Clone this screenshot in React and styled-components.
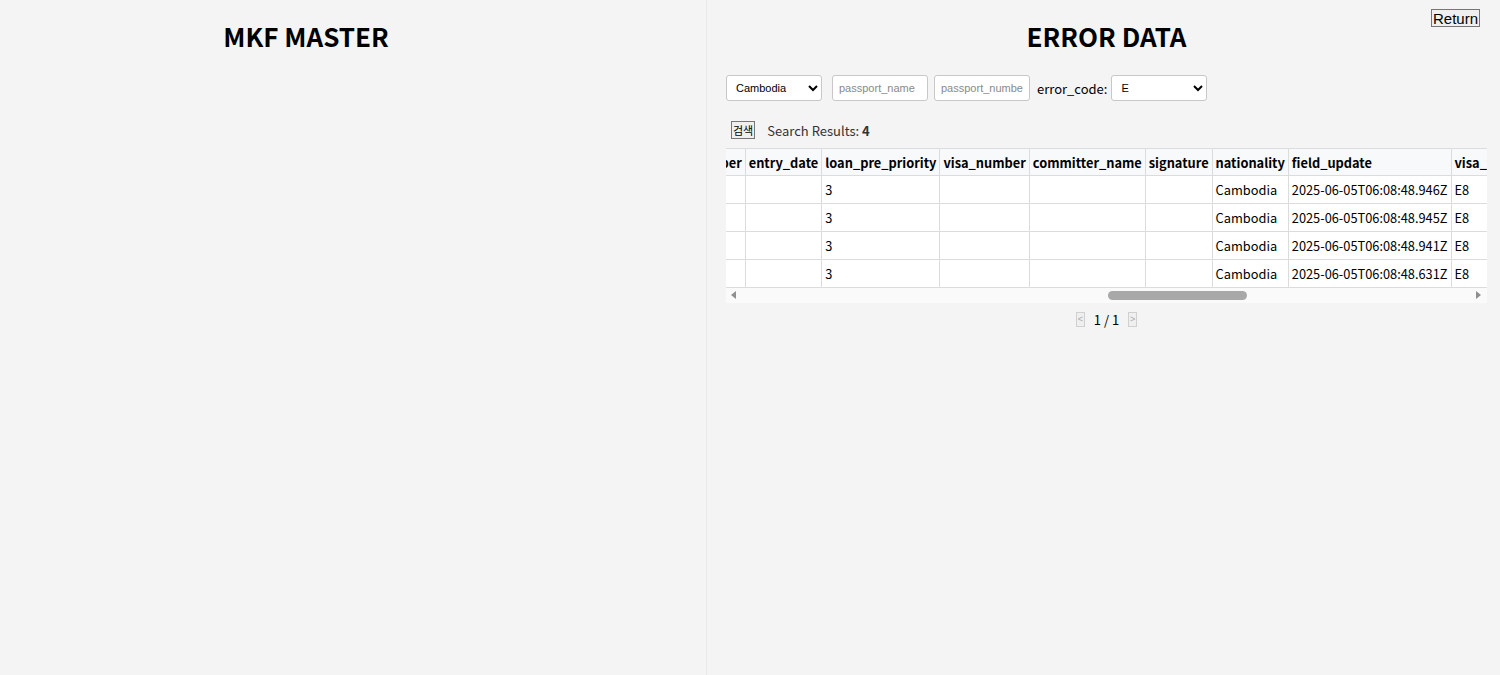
import React, { useLayoutEffect, useRef, useState } from "react";
import styled, { createGlobalStyle } from "styled-components";

const GlobalStyle = createGlobalStyle`
  html, body {
    margin: 0;
    padding: 0;
    background: #f4f4f4;
    font-family: "Noto Sans CJK KR", "Noto Sans", sans-serif;
  }
`;

// hidden columns (scrolled off to the left) get a fixed width so the scroll matches
const columns = [
  { key: "id", w: 60 },
  { key: "error_code", w: 90 },
  { key: "error_message", w: 400 },
  { key: "created_at", w: 170 },
  { key: "branch_code", w: 100 },
  { key: "passport_name", w: 180 },
  { key: "gender", w: 70 },
  { key: "birth_date", w: 100 },
  { key: "phone_number", w: 120 },
  { key: "address", w: 220 },
  { key: "email", w: 160 },
  { key: "employer_name", w: 150 },
  { key: "passport_number" },
  { key: "entry_date" },
  { key: "loan_pre_priority" },
  { key: "visa_number" },
  { key: "committer_name" },
  { key: "signature" },
  { key: "nationality" },
  { key: "field_update" },
  { key: "visa_type", w: 90 },
  { key: "visa_expiry_date", w: 130 },
  { key: "loan_amount", w: 110 },
  { key: "loan_status", w: 100 },
  { key: "bank_account", w: 140 },
  { key: "bank_name", w: 120 },
  { key: "remark", w: 220 },
  { key: "approved_by", w: 120 },
  { key: "updated_at", w: 170 },
];

const rows = [
  { error_code: "E", loan_pre_priority: "3", nationality: "Cambodia", field_update: "2025-06-05T06:08:48.946Z", visa_type: "E8" },
  { error_code: "E", loan_pre_priority: "3", nationality: "Cambodia", field_update: "2025-06-05T06:08:48.945Z", visa_type: "E8" },
  { error_code: "E", loan_pre_priority: "3", nationality: "Cambodia", field_update: "2025-06-05T06:08:48.941Z", visa_type: "E8" },
  { error_code: "E", loan_pre_priority: "3", nationality: "Cambodia", field_update: "2025-06-05T06:08:48.631Z", visa_type: "E8" },
];

const TRACK_PAD = 15;

const App = () => {
  const scrollRef = useRef(null);
  const anchorRef = useRef(null);
  const [thumb, setThumb] = useState({ left: 0, width: 0 });

  useLayoutEffect(() => {
    const box = scrollRef.current;
    if (!box || !anchorRef.current) return;
    box.scrollLeft = anchorRef.current.offsetLeft - 19;
    const track = box.clientWidth - TRACK_PAD * 2;
    setThumb({
      left: (track * box.scrollLeft) / box.scrollWidth,
      width: (track * box.clientWidth) / box.scrollWidth,
    });
  }, []);

  return (
    <>
      <GlobalStyle />
      <Page>
        <LeftPanel>
          <LeftTitle>MKF MASTER</LeftTitle>
        </LeftPanel>
        <RightPanel>
          <ReturnButton>Return</ReturnButton>
          <Title>ERROR DATA</Title>
          <FilterRow>
            <Select defaultValue="Cambodia" $gap={10}>
              <option>Cambodia</option>
              <option>Vietnam</option>
              <option>Nepal</option>
            </Select>
            <Input placeholder="passport_name" />
            <Input placeholder="passport_number" />
            <Label>error_code:</Label>
            <Select defaultValue="E">
              <option>E</option>
              <option>W</option>
            </Select>
          </FilterRow>
          <SearchRow>
            <SmallButton>검색</SmallButton>
            <Results>
              Search Results: <b>4</b>
            </Results>
          </SearchRow>
          <TableScroll ref={scrollRef}>
            <Table>
              <thead>
                <tr>
                  {columns.map((c) => (
                    <Th
                      key={c.key}
                      $w={c.w}
                      ref={c.key === "entry_date" ? anchorRef : null}
                    >
                      {c.key}
                    </Th>
                  ))}
                </tr>
              </thead>
              <tbody>
                {rows.map((r, i) => (
                  <tr key={i}>
                    {columns.map((c) => (
                      <Td key={c.key} $w={c.w}>
                        {r[c.key] || ""}
                      </Td>
                    ))}
                  </tr>
                ))}
              </tbody>
            </Table>
          </TableScroll>
          <ScrollBar>
            <ArrowButton>
              <svg width="15" height="15" viewBox="0 0 15 15">
                <polygon points="5,7 10,3 10,11" fill="#8f8f8f" />
              </svg>
            </ArrowButton>
            <Track>
              <Thumb style={{ left: thumb.left, width: thumb.width }} />
            </Track>
            <ArrowButton>
              <svg width="15" height="15" viewBox="0 0 15 15">
                <polygon points="9,7 4,3 4,11" fill="#8f8f8f" />
              </svg>
            </ArrowButton>
          </ScrollBar>
          <Pager>
            <PageButton disabled>&lt;</PageButton>
            <PageText>1 / 1</PageText>
            <PageButton disabled>&gt;</PageButton>
          </Pager>
        </RightPanel>
      </Page>
    </>
  );
};
export default App;

const Page = styled.div`
  display: flex;
  min-height: 675px;
`;

const LeftPanel = styled.div`
  width: 707px;
  flex-shrink: 0;
  border-right: 1px solid #e9e9e9;
  box-sizing: border-box;
  padding-right: 94px;
`;

const LeftTitle = styled.h2`
  margin: 17px 0 0;
  text-align: center;
  font-size: 26px;
  font-weight: 700;
  color: #000;
`;

const RightPanel = styled.div`
  position: relative;
  flex: 1;
  min-width: 0;
  padding: 0 13px 0 19px;
`;

const Title = styled(LeftTitle)``;

const ReturnButton = styled.button`
  position: absolute;
  top: 9px;
  right: 20px;
  height: 18px;
  padding: 0 1px;
  font-family: "Liberation Sans", Arial, sans-serif;
  font-size: 15px;
  line-height: 15px;
  color: #000;
  background: #efefef;
  border: 1px solid #767676;
  border-radius: 0;
`;

const FilterRow = styled.div`
  display: flex;
  align-items: center;
  margin-top: 21px;
`;

const Select = styled.select`
  width: 96px;
  height: 26px;
  box-sizing: border-box;
  margin-right: ${(p) => p.$gap || 0}px;
  padding: 0 5px;
  font-family: "Liberation Sans", Arial, sans-serif;
  font-size: 11px;
  color: #000;
  background: #fff;
  border: 1px solid #c8c8c8;
  border-radius: 3px;
`;

const Input = styled.input`
  width: 96px;
  height: 26px;
  box-sizing: border-box;
  margin-right: 6px;
  padding: 0 6px;
  font-family: "Liberation Sans", Arial, sans-serif;
  font-size: 11px;
  background: #fff;
  border: 1px solid #c8c8c8;
  border-radius: 3px;
  &::placeholder {
    color: #8a8a8a;
  }
`;

const Label = styled.span`
  margin: 0 4px 0 1px;
  font-size: 13px;
  color: #000;
`;

const SearchRow = styled.div`
  display: flex;
  align-items: center;
  margin-top: 19px;
  padding-left: 5px;
  height: 20px;
`;

const SmallButton = styled.button`
  padding: 0 1px;
  height: 18px;
  font-family: "Noto Sans CJK KR", sans-serif;
  font-size: 11px;
  line-height: 14px;
  color: #000;
  background: #efefef;
  border: 1px solid #767676;
  border-radius: 0;
`;

const Results = styled.span`
  margin-left: 12px;
  font-size: 13px;
  color: #333;
  b {
    font-weight: 700;
  }
`;

const TableScroll = styled.div`
  margin-top: 8px;
  overflow: hidden;
`;

const ScrollBar = styled.div`
  display: flex;
  height: 15px;
  background: #fafafa;
`;

const ArrowButton = styled.div`
  width: 15px;
  height: 15px;
  flex-shrink: 0;
  svg {
    display: block;
  }
`;

const Track = styled.div`
  position: relative;
  flex: 1;
`;

const Thumb = styled.div`
  position: absolute;
  top: 3px;
  height: 9px;
  border-radius: 5px;
  background: #a8a8a8;
`;

const Table = styled.table`
  border-collapse: collapse;
  white-space: nowrap;
  font-size: 12.8px;
  color: #000;
`;

const Th = styled.th`
  min-width: ${(p) => (p.$w ? `${p.$w}px` : "0")};
  height: 26px;
  padding: 0 3px;
  text-align: left;
  font-weight: 700;
  background: #f8f9fa;
  border: 1px solid #dcdcdc;
`;

const Td = styled.td`
  min-width: ${(p) => (p.$w ? `${p.$w}px` : "0")};
  height: 27px;
  padding: 0 3px;
  background: #fff;
  border: 1px solid #dcdcdc;
`;

const Pager = styled.div`
  display: flex;
  justify-content: center;
  align-items: center;
  gap: 9px;
  margin-top: 7px;
`;

const PageButton = styled.button`
  width: 9px;
  height: 15px;
  padding: 0;
  font-size: 9px;
  line-height: 13px;
  color: #aaa;
  background: #efefef;
  border: 1px solid #d0d0d0;
`;

const PageText = styled.span`
  font-size: 13px;
  color: #000;
`;
